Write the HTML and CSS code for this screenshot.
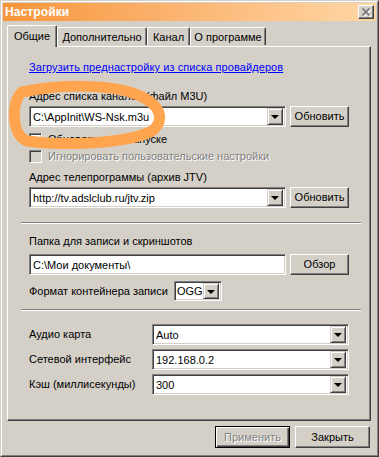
FILE: index.html
```html
<!DOCTYPE html>
<html lang="ru">
<head>
<meta charset="utf-8">
<title>Настройки</title>
<link rel="stylesheet" href="styles.css">
</head>
<body>
<div class="window">
  <div class="window-inner">
    <div class="titlebar">
      <span class="title">Настройки</span>
      <span class="close">
        <svg width="16" height="14" viewBox="0 0 16 14">
          <path d="M4.5 3.5 L11.5 10.5 M11.5 3.5 L4.5 10.5" stroke="#ffffff" stroke-width="1.8" transform="translate(1 1)"/>
          <path d="M4.5 3.5 L11.5 10.5 M11.5 3.5 L4.5 10.5" stroke="#808080" stroke-width="1.8"/>
        </svg>
      </span>
    </div>

    <div class="tabs">
      <div class="tab active t1">Общие</div>
      <div class="tab t2">Дополнительно</div>
      <div class="tab t3">Канал</div>
      <div class="tab t4">О программе</div>
    </div>

    <div class="panel">
      <div class="group g1">
        <a class="link">Загрузить преднастройку из списка провайдеров</a>
        <div class="label l1">Адрес списка каналов (файл M3U)</div>
        <div class="row r1">
          <div class="combo wide"><span class="value">C:\AppInit\WS-Nsk.m3u</span><span class="drop"><i></i></span></div>
          <div class="btn">Обновить</div>
        </div>
        <div class="check c1"><span class="box"></span><span>Обновлять при запуске</span></div>
        <div class="check c2 disabled"><span class="box"></span><span>Игнорировать пользовательские настройки</span></div>
        <div class="label l2">Адрес телепрограммы (архив JTV)</div>
        <div class="row r2">
          <div class="combo wide"><span class="value">http://tv.adslclub.ru/jtv.zip</span><span class="drop"><i></i></span></div>
          <div class="btn">Обновить</div>
        </div>
      </div>

      <div class="sep s1"></div>

      <div class="group g2">
        <div class="label l3">Папка для записи и скриншотов</div>
        <div class="row r3">
          <div class="textbox wide"><span class="value">C:\Мои документы\</span></div>
          <div class="btn">Обзор</div>
        </div>
        <div class="row r4">
          <span class="fmt-label">Формат контейнера записи</span>
          <div class="combo small"><span class="value">OGG</span><span class="drop"><i></i></span></div>
        </div>
      </div>

      <div class="sep s2"></div>

      <div class="group g3">
        <div class="field">
          <span class="flabel">Аудио карта</span>
          <div class="combo long"><span class="value">Auto</span><span class="drop"><i></i></span></div>
        </div>
        <div class="field">
          <span class="flabel">Сетевой интерфейс</span>
          <div class="combo long"><span class="value">192.168.0.2</span><span class="drop"><i></i></span></div>
        </div>
        <div class="field">
          <span class="flabel">Кэш (миллисекунды)</span>
          <div class="combo long"><span class="value">300</span><span class="drop"><i></i></span></div>
        </div>
      </div>
    </div>

    <div class="actions">
      <div class="btn big default disabled"><span>Применить</span></div>
      <div class="btn big">Закрыть</div>
    </div>
  </div>
</div>

<svg class="annotation" width="379" height="457" viewBox="0 0 379 457">
  <path d="M22 92 C 60 84, 112 84, 138 95 C 162 105, 165 121, 152 131 C 126 144, 64 146, 27 141 C 11 135, 11 101, 22 92 Z"
        fill="none" stroke="#ffa54f" stroke-width="11" stroke-linecap="round" stroke-linejoin="round"/>
</svg>
</body>
</html>
```

FILE: styles.css
```css
* { box-sizing: border-box; }

html, body {
  margin: 0;
  padding: 0;
}

body {
  position: relative;
  width: 379px;
  height: 457px;
  overflow: hidden;
  background: #d4d0c8;
  font-family: "Liberation Sans", Arial, sans-serif;
  font-size: 11px;
  line-height: 13px;
  color: #000;
}

.window {
  width: 379px;
  height: 457px;
  background: #d4d0c8;
  border: 1px solid;
  border-color: #d4d0c8 #404040 #404040 #d4d0c8;
}

.window-inner {
  height: 100%;
  border: 1px solid;
  border-color: #ffffff #808080 #808080 #ffffff;
  padding: 1px;
  display: flex;
  flex-direction: column;
}

/* title bar */
.titlebar {
  height: 18px;
  flex: none;
  display: flex;
  align-items: center;
  justify-content: space-between;
  padding: 0 2px 0 2px;
  background: linear-gradient(to right, #f7953b 0%, #fbb36f 45%, #ffd7a6 100%);
}

.title {
  color: #fff;
  font-weight: bold;
  font-size: 12px;
  letter-spacing: 0.1px;
}

.close {
  width: 16px;
  height: 14px;
  display: block;
  background: #d4d0c8;
  border: 1px solid;
  border-color: #ffffff #404040 #404040 #ffffff;
  box-shadow: inset -1px -1px #808080;
  position: relative;
}

.close svg {
  position: absolute;
  left: -1px;
  top: -1px;
}

/* tabs */
.tabs {
  flex: none;
  display: flex;
  align-items: flex-end;
  height: 22px;
  margin-top: 3px;
  padding-left: 4px;
  position: relative;
  z-index: 2;
}

.tab {
  height: 18px;
  display: flex;
  align-items: center;
  justify-content: center;
  border-top: 1px solid #fff;
  border-left: 1px solid #fff;
  border-right: 1px solid #404040;
  box-shadow: inset -1px 0 #808080;
  border-radius: 2px 2px 0 0;
  background: #d4d0c8;
  margin-bottom: 1px;
  padding-top: 1px;
}

.tab.active {
  height: 22px;
  margin-bottom: -1px;
  padding-bottom: 1px;
}

.t1 { width: 50px; }
.t2 { width: 90px; }
.t3 { width: 43px; }
.t4 { width: 76px; }

/* panel */
.panel {
  flex: none;
  height: 375px;
  margin: 0 5px 0 4px;
  border: 1px solid;
  border-color: #ffffff #404040 #404040 #ffffff;
  box-shadow: inset -1px -1px #808080;
  padding: 0 9px 0 13px;
  position: relative;
  z-index: 1;
}

.group {
  padding: 0 12px 0 8px;
  display: flex;
  flex-direction: column;
}

.g1 { padding-top: 14px; }

.link {
  color: #0000ff;
  text-decoration: underline;
  height: 13px;
  letter-spacing: 0.08px;
}

.label { height: 13px; }
.l1 { margin-top: 16px; }
.l2 { margin-top: 8px; }
.l3 { margin-top: 11px; }

.row {
  display: flex;
  align-items: center;
}

.r1 { margin-top: 3px; }
.r2 { margin-top: 3px; }
.r3 { margin-top: 6px; }
.r4 { margin-top: 6px; }

.wide { width: 257px; }

.combo, .textbox {
  height: 21px;
  background: #fff;
  border: 1px solid;
  border-color: #808080 #ffffff #ffffff #808080;
  box-shadow: inset 1px 1px #404040, inset -1px -1px #d4d0c8;
  display: flex;
  align-items: center;
  padding: 1px 2px 0 3px;
  position: relative;
}

.value {
  flex: 1;
  white-space: nowrap;
  overflow: hidden;
}

.drop {
  width: 16px;
  height: 17px;
  flex: none;
  margin-top: -1px;
  background: #d4d0c8;
  border: 1px solid;
  border-color: #d4d0c8 #404040 #404040 #d4d0c8;
  box-shadow: inset 1px 1px #fff, inset -1px -1px #808080;
  display: flex;
  align-items: center;
  justify-content: center;
}

.drop i {
  width: 0;
  height: 0;
  border-left: 4px solid transparent;
  border-right: 4px solid transparent;
  border-top: 4px solid #000;
  margin-top: 1px;
}

.btn {
  width: 59px;
  height: 21px;
  margin-left: 4px;
  background: #d4d0c8;
  border: 1px solid;
  border-color: #ffffff #404040 #404040 #ffffff;
  box-shadow: inset -1px -1px #808080;
  display: flex;
  align-items: center;
  justify-content: center;
}

/* checkboxes */
.check {
  display: flex;
  align-items: center;
  height: 13px;
  gap: 6px;
}

.c1 { margin-top: 6px; }
.c2 { margin-top: 4px; }

.box {
  width: 13px;
  height: 13px;
  flex: none;
  background: #fff;
  border: 1px solid;
  border-color: #808080 #ffffff #ffffff #808080;
  box-shadow: inset 1px 1px #404040, inset -1px -1px #d4d0c8;
}

.disabled {
  color: #808080;
  text-shadow: 1px 1px #ffffff;
}

.check.disabled .box { background: #d4d0c8; }

/* separators */
.sep {
  height: 2px;
  border-top: 1px solid #808080;
  border-bottom: 1px solid #ffffff;
}

.s1 { margin-top: 14px; }
.s2 { margin-top: 8px; }

.fmt-label { width: 145px; }

.combo.small {
  width: 48px;
  height: 20px;
  padding-left: 2px;
}

.combo.small .drop { height: 16px; }

/* section 3 */
.g3 {
  padding-top: 13px;
  gap: 4px;
}

.field {
  display: flex;
  align-items: center;
}

.flabel { width: 123px; }

.long { width: 197px; }

/* bottom buttons */
.actions {
  display: flex;
  justify-content: flex-end;
  gap: 5px;
  margin-top: 5px;
  padding-right: 6px;
}

.btn.big {
  width: 75px;
  height: 22px;
  margin-left: 0;
}

.btn.default {
  border: 1px solid #000;
  box-shadow: inset 1px 1px #ffffff, inset -1px -1px #404040, inset -2px -2px #808080;
}

/* annotation overlay */
.annotation {
  position: absolute;
  left: 0;
  top: 0;
  pointer-events: none;
  z-index: 10;
}
```
